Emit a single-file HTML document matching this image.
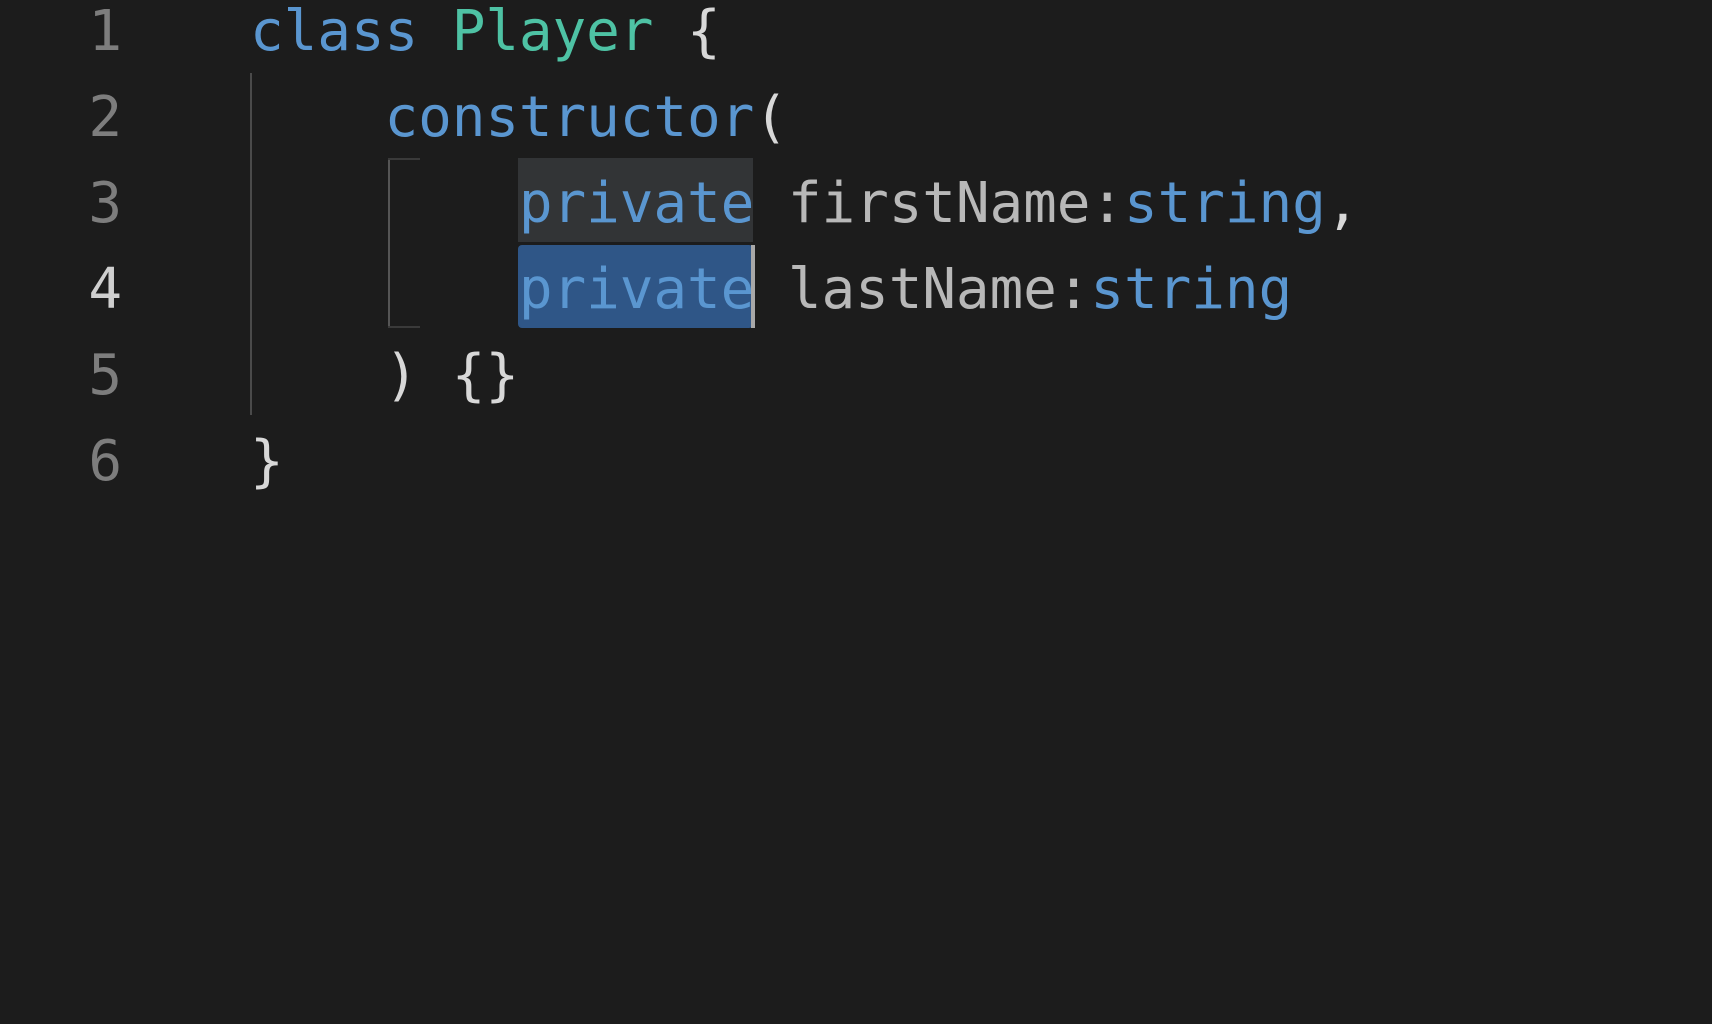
<!DOCTYPE html>
<html><head><meta charset="utf-8"><style>
html,body{margin:0;padding:0;background:#1c1c1c;width:1712px;height:512px;overflow:hidden}
.wrap{position:absolute;left:0;top:-11px;font-family:"DejaVu Sans Mono","Liberation Mono",monospace;font-size:56px;letter-spacing:-0.1px;line-height:86px;white-space:pre}
.ln{position:absolute;left:0;width:122px;text-align:right;color:#7d7d7d}
.code{position:absolute;left:250px;color:#b8b8b8}
.k{color:#5a96d0}.c{color:#4ec2a4}.w{color:#d8d8d8}
.abs{position:absolute}
</style></head><body>
<div class="abs" style="left:518px;top:158px;width:235px;height:84px;background:#323436"></div>
<div class="abs" style="left:518px;top:245px;width:235px;height:83px;background:#2f5687;border-radius:4px"></div>
<div class="abs" style="left:751px;top:245px;width:4px;height:83px;background:#a8a8a8"></div>
<div class="abs" style="left:250px;top:73px;width:2px;height:342px;background:#4a4a4a"></div>
<div class="abs" style="left:388px;top:158px;width:2px;height:170px;background:#555"></div>
<div class="abs" style="left:388px;top:158px;width:32px;height:2px;background:#3a3a3a"></div>
<div class="abs" style="left:388px;top:326px;width:32px;height:2px;background:#3a3a3a"></div>
<div class="wrap">
<div class="ln" style="top:0">1</div>
<div class="ln" style="top:86px">2</div>
<div class="ln" style="top:172px">3</div>
<div class="ln" style="top:258px;color:#cfcfcf">4</div>
<div class="ln" style="top:344px">5</div>
<div class="ln" style="top:430px">6</div>
<div class="code" style="top:0"><span class="k">class</span> <span class="c">Player</span> <span class="w">{</span></div>
<div class="code" style="top:86px">    <span class="k">constructor</span><span class="w">(</span></div>
<div class="code" style="top:172px">        <span class="k">private</span> firstName:<span class="k">string</span><span class="w">,</span></div>
<div class="code" style="top:258px">        <span class="k">private</span> lastName:<span class="k">string</span></div>
<div class="code" style="top:344px">    <span class="w">) {}</span></div>
<div class="code" style="top:430px"><span class="w">}</span></div>
</div>
</body></html>
